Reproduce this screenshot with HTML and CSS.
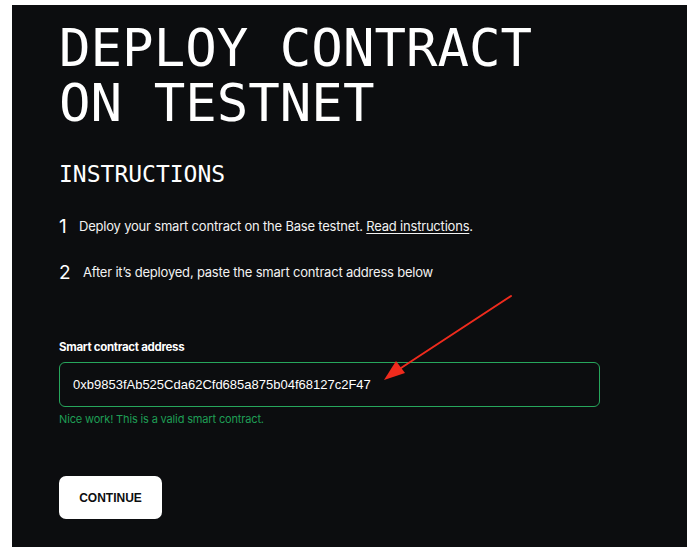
FILE: index.html
```html
<!DOCTYPE html>
<html lang="en">
<head>
<meta charset="utf-8">
<title>Deploy contract on testnet</title>
<link rel="stylesheet" href="styles.css">
</head>
<body>
<main class="panel">
  <h1 class="title">DEPLOY CONTRACT<br>ON TESTNET</h1>
  <h2 class="subtitle">INSTRUCTIONS</h2>
  <ol class="steps">
    <li class="step step-1"><span class="num">1</span><span class="text">Deploy your smart contract on the Base testnet. <a class="link" href="#">Read instructions</a>.</span></li>
    <li class="step step-2"><span class="num">2</span><span class="text">After it’s deployed, paste the smart contract address below</span></li>
  </ol>
  <div class="field">
    <label class="label" for="addr">Smart contract address</label>
    <div class="input">0xb9853fAb525Cda62Cfd685a875b04f68127c2F47</div>
    <p class="hint">Nice work! This is a valid smart contract.</p>
  </div>
  <button class="btn" type="button">CONTINUE</button>
  <svg class="arrow" width="140" height="100" viewBox="0 0 140 100">
    <line x1="130" y1="8" x2="20" y2="80" stroke="#ef2b1d" stroke-width="2" stroke-linecap="round"/>
    <polygon points="3,92 15,73 24,85" fill="#ef2b1d"/>
  </svg>
</main>
</body>
</html>
```
FILE: styles.css
```css
html, body {
  margin: 0;
  padding: 0;
  background: #ffffff;
}
.panel {
  position: relative;
  box-sizing: border-box;
  margin: 5px 7px 0 12px;
  height: 542px;
  background: #0c0d0f;
  padding: 15px 0 0 47px;
  color: #ffffff;
  font-family: Inter, "Noto Sans", sans-serif;
}
.title {
  margin: 0;
  font-family: "DejaVu Sans Mono", monospace;
  font-weight: 400;
  font-size: 52.4px;
  line-height: 55px;
  letter-spacing: 0;
}
.subtitle {
  margin: 30px 0 0 0;
  font-family: "DejaVu Sans Mono", monospace;
  font-weight: 400;
  font-size: 23px;
  line-height: 28px;
}
.steps {
  list-style: none;
  margin: 26px 0 0 0;
  padding: 0;
  display: flex;
  flex-direction: column;
  gap: 22px;
}
.step {
  display: flex;
  align-items: center;
  height: 24px;
}
.num {
  font-family: Inter, sans-serif;
  font-size: 19px;
  font-weight: 400;
  width: 20px;
}
.step-2 .num { width: 24px; }
.text {
  font-size: 13px;
  letter-spacing: -0.2px;
  color: #f2f2f2;
}
.link {
  color: #f2f2f2;
  text-decoration: underline;
  text-underline-offset: 2px;
}
.field {
  margin-top: 55px;
  width: 541px;
}
.label {
  display: block;
  font-size: 11.5px;
  font-weight: 700;
  line-height: 16px;
  letter-spacing: -0.3px;
}
.input {
  box-sizing: border-box;
  margin-top: 7px;
  height: 45px;
  border: 1px solid #27a65c;
  border-radius: 6px;
  padding: 0 0 0 13px;
  display: flex;
  align-items: center;
  font-family: "Liberation Sans", Arial, sans-serif;
  font-size: 13px;
  color: #ffffff;
}
.hint {
  margin: 5px 0 0 0;
  font-size: 11px;
  line-height: 14px;
  letter-spacing: -0.15px;
  color: #1f9e55;
}
.btn {
  margin-top: 50px;
  width: 103px;
  height: 43px;
  border: none;
  border-radius: 7px;
  background: #ffffff;
  color: #0c0d0f;
  font-family: "Liberation Sans", Arial, sans-serif;
  font-size: 12px;
  font-weight: 700;
  cursor: pointer;
}
.arrow {
  position: absolute;
  left: 369px;
  top: 283px;
}
```
